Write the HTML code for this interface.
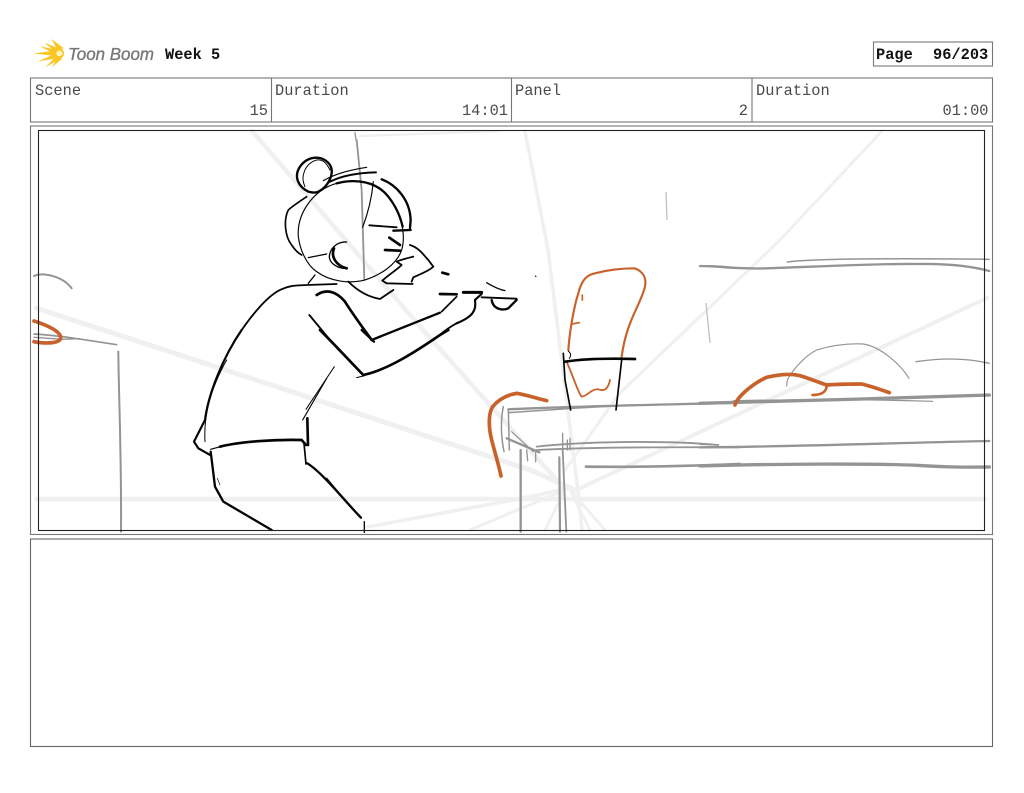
<!DOCTYPE html>
<html lang="en">
<head>
<meta charset="utf-8">
<title>Storyboard</title>
<style>
html,body{margin:0;padding:0;background:#fff;width:1024px;height:793px;overflow:hidden}
svg{display:block;filter:blur(.3px)}
text{font-family:"Liberation Mono",monospace;font-size:15.35px;fill:#4a4a4a}
.b{font-weight:bold;fill:#111}
.k path{fill:none;stroke:#050505;stroke-linecap:round;stroke-linejoin:round}
.g path{fill:none;stroke:#949494;stroke-linecap:round;stroke-linejoin:round}
.o path{fill:none;stroke:#c8622a;stroke-linecap:round;stroke-linejoin:round}
.l path{fill:none;stroke:#f0f0f0;stroke-linecap:round}
</style>
</head>
<body>
<svg width="1024" height="793" viewBox="0 0 1024 793" xmlns="http://www.w3.org/2000/svg">
<rect width="1024" height="793" fill="#fff"/>

<!-- logo -->
<g transform="translate(0,30) scale(.3333)" fill="#f8c726">
<path d="M155 27L192 55L170 57Z"/>
<path d="M133 38L175 55L165 65Z"/>
<path d="M118 48L170 60L165 72Z"/>
<path d="M100 70L165 62L165 78Z"/>
<path d="M112 95L165 72L170 85Z"/>
<path d="M135 112L168 80L178 88Z"/>
<path d="M155 112L172 85L188 85Z"/>
<circle cx="175" cy="70" r="17"/>
<ellipse cx="178" cy="70" rx="9" ry="8" fill="#fff6c8"/>
</g>
<text x="68" y="60" textLength="86" lengthAdjust="spacingAndGlyphs" style="font-family:'Liberation Sans',sans-serif;font-style:italic;font-size:17.5px;fill:#777;stroke:#777;stroke-width:.35">Toon Boom</text>
<text x="165" y="59" class="b">Week 5</text>

<!-- page box -->
<rect x="873.5" y="42" width="119" height="24" fill="none" stroke="#777" stroke-width="1.1"/>
<text x="876" y="59" class="b">Page</text>
<text x="933" y="59" class="b">96/203</text>

<!-- header table -->
<rect x="30.5" y="78" width="962" height="44" fill="none" stroke="#777" stroke-width="1.1"/>
<path d="M271.5 78V122M511.5 78V122M752 78V122" stroke="#777" stroke-width="1.1" fill="none"/>
<text x="35" y="95">Scene</text>
<text x="275" y="95">Duration</text>
<text x="515" y="95">Panel</text>
<text x="756" y="95">Duration</text>
<text x="268" y="115" text-anchor="end">15</text>
<text x="508" y="115" text-anchor="end">14:01</text>
<text x="748" y="115" text-anchor="end">2</text>
<text x="988.5" y="115" text-anchor="end">01:00</text>

<!-- construction lines -->
<g class="l">
<path stroke-width="4.5" d="M252 131L423 330L563 487"/>
<path stroke-width="5" d="M36 308L180 355L530 470L575 490"/>
<path stroke-width="4.5" d="M36 499H985"/>
<path stroke-width="3.5" d="M525 131L548 250L577 483L582 530"/>
<path stroke-width="3" d="M882 131L780 240L620 393L565 470"/>
<path stroke-width="4" d="M987 298L700 432L572 492"/>
<path stroke-width="3.5" d="M367 527L513 500L570 488"/>
<path stroke-width="3" d="M570 490L605 530M570 490L590 530M565 490L545 530M565 490L470 530"/>
<path stroke-width="2.5" d="M360 136L500 131"/>
</g>

<!-- grey sketch: left -->
<g class="g" transform="translate(20,260) scale(.3333)">
<path stroke-width="6" d="M42 48C70 35 130 50 155 85"/>
<path stroke-width="5" d="M42 222C100 225 130 230 185 238L290 254"/>
<path stroke-width="4" d="M42 232L125 238L180 236"/>
<path stroke-width="6" d="M295 275C296 400 305 600 303 815"/>
</g>

<!-- grey vertical over head -->
<g class="g" transform="translate(180,140) scale(.3333)">
<path stroke-width="5.5" d="M530 0L545 150L553 420"/>
<path stroke-width="4" d="M525 -22L528 0"/>
</g>
<path d="M666 192L667 220M706 303L710 343" stroke="#bbb" stroke-width="1.2" fill="none"/>

<!-- table -->
<g class="g" transform="translate(480,250) scale(.3333)">
<path stroke-width="7" d="M85 478C250 470 500 465 780 458"/>
<path stroke-width="4.5" d="M85 488C200 480 270 475 400 468"/>
<path stroke-width="4.5" d="M70 470C60 520 65 570 72 605"/>
<path stroke-width="4.5" d="M85 480L88 600"/>
<path stroke-width="7" d="M80 565L178 607"/>
<path stroke-width="3.5" d="M95 545L160 605"/>
<path stroke-width="4" d="M140 600L143 632M167 600L167 635M262 570L262 600M270 565L270 600"/>
<path stroke-width="5.5" d="M170 590C300 575 550 570 715 585"/>
<path stroke-width="5.5" d="M170 600C350 590 600 592 780 592"/>
<path stroke-width="4" d="M248 550L248 600"/>
<path stroke-width="7" d="M122 600L122 845"/>
<path stroke-width="6.5" d="M238 622L240 845"/>
<path stroke-width="5.5" d="M248 600L259 845"/>
<path stroke-width="8" d="M318 650C450 652 650 648 780 642"/>
<path stroke-width="5" d="M660 48C700 46 740 50 780 55"/>
</g>
<g class="g" transform="translate(700,240) scale(.3333)">
<path stroke-width="7" d="M0 78C60 78 100 88 200 85C350 80 550 70 650 72C750 70 820 80 868 93"/>
<path stroke-width="4.5" d="M262 66C350 55 600 55 868 58"/>
<path stroke-width="3.5" d="M260 438L262 420C275 395 310 350 350 330C400 315 450 310 490 312C540 320 600 370 627 415"/>
<path stroke-width="4" d="M648 365C720 355 790 352 868 370"/>
<path stroke-width="10" d="M0 490C250 483 600 475 868 465"/>
<path stroke-width="3.5" d="M100 482C300 478 500 478 698 484"/>
<path stroke-width="7" d="M0 622C300 620 600 608 868 603"/>
<path stroke-width="4" d="M0 613L52 615"/>
<path stroke-width="10" d="M0 678C200 672 500 670 650 676C750 682 800 682 868 681"/>
</g>

<!-- orange -->
<g class="o" transform="translate(20,260) scale(.3333)">
<path stroke-width="11" d="M42 183C80 195 125 215 122 235C118 250 80 252 42 245"/>
</g>
<g class="o" transform="translate(480,250) scale(.3333)">
<path stroke-width="6.5" d="M265 300C270 230 285 160 295 130C305 90 320 75 345 70C390 58 430 55 465 55C490 65 500 85 495 110C480 170 440 210 425 320"/>
<path stroke-width="5.5" d="M262 340C280 380 295 430 305 440C320 440 335 415 355 418C375 425 385 415 390 390"/>
<path stroke-width="5" d="M307 135L307 150M275 222L298 218"/>
<path stroke-width="11" d="M200 452C170 445 140 435 110 430C80 435 55 450 38 470C25 490 25 530 35 570C45 610 55 640 63 678"/>
</g>
<g class="o" transform="translate(700,240) scale(.3333)">
<path stroke-width="11" d="M105 495C110 475 150 435 200 412C230 405 270 400 300 407C340 420 370 432 380 435C420 432 460 432 485 432C510 438 540 448 568 458"/>
<path stroke-width="8" d="M380 440C378 458 360 465 338 465"/>
</g>

<!-- chair black -->
<g class="k" transform="translate(480,250) scale(.3333)">
<path stroke-width="5" d="M250 310L255 390L272 480"/>
<path stroke-width="8" d="M255 335C320 325 400 325 465 327"/>
<path stroke-width="5" d="M425 330L408 480"/>
<path stroke-width="3" d="M265 303C272 310 275 315 268 325"/>
<path stroke-width="3" d="M166 78L168 80"/>
</g>

<!-- character: upper -->
<g class="k" transform="translate(180,140) scale(.3333)">
<path stroke-width="7" d="M385 155C355 140 340 110 360 80C385 45 430 45 450 75C465 100 445 140 415 155C405 160 395 158 385 155Z"/>
<path stroke-width="3" d="M375 140C360 110 375 70 410 60C430 58 440 70 450 90"/>
<path stroke-width="3.5" d="M430 122C470 100 510 90 560 82"/>
<path stroke-width="6" d="M450 125C490 105 540 98 588 97"/>
<path stroke-width="3.5" d="M355 290C350 220 400 150 470 130C530 115 590 125 625 170C660 215 680 280 665 330C650 375 600 405 555 420C510 432 450 425 410 395C380 375 360 330 355 290Z"/>
<path stroke-width="7" d="M470 130C530 115 590 125 625 170C645 195 660 225 668 260"/>
<path stroke-width="7" d="M605 118C650 135 690 180 692 240L690 265"/>
<path stroke-width="7" d="M640 272L692 270"/>
<path stroke-width="5.5" d="M568 256L650 262"/>
<path stroke-width="3.5" d="M580 125C575 180 560 230 548 262"/>
<path stroke-width="5" d="M380 170C350 190 330 205 325 210C310 240 315 290 335 315C345 330 355 340 365 345"/>
<path stroke-width="4" d="M385 353L440 342"/>
<path stroke-width="4" d="M500 306C470 305 450 325 448 350C448 370 475 388 502 385"/>
<path stroke-width="8" d="M462 325C452 350 468 377 500 385"/>
<path stroke-width="8" d="M628 293L660 315"/>
<path stroke-width="8" d="M615 330L660 332"/>
<path stroke-width="5.5" d="M690 315C720 325 730 345 745 360L760 380C745 395 720 402 700 412L695 425"/>
<path stroke-width="5.5" d="M700 350C680 355 660 360 650 365L665 375C650 390 625 405 607 422L620 430L698 432"/>
<path stroke-width="8" d="M787 398L805 403"/>
<path stroke-width="4" d="M405 405L385 430"/>
<path stroke-width="5.5" d="M505 425C530 450 560 470 600 477L640 450"/>
<path stroke-width="5.5" d="M165 600C210 530 260 470 300 450C330 435 350 437 380 435L470 432"/>
<path stroke-width="8" d="M410 465C440 445 470 455 495 485C520 525 550 565 575 600"/>
<path stroke-width="7" d="M575 600L780 518"/>
<path stroke-width="8" d="M780 462L830 463"/>
<path stroke-width="9" d="M850 457L905 457"/>
<path stroke-width="5" d="M830 470L785 515"/>
<path stroke-width="6.5" d="M905 462L885 480C890 510 880 530 830 550"/>
<path stroke-width="5.5" d="M830 550C800 565 780 585 760 600"/>
<path stroke-width="5.5" d="M905 472L1010 476"/>
<path stroke-width="7" d="M935 480C940 510 970 512 985 505L1010 480"/>
<path stroke-width="4" d="M920 428C940 440 955 448 975 452"/>
<path stroke-width="5.5" d="M388 525L450 600"/>
</g>

<!-- character: lower -->
<g class="k" transform="translate(180,330) scale(.3333)">
<path stroke-width="6.5" d="M185 0C130 80 85 190 75 270L42 335L55 355L90 375"/>
<path stroke-width="3" d="M140 90C95 170 70 250 75 335"/>
<path stroke-width="8" d="M120 350C180 335 280 328 365 330L378 345"/>
<path stroke-width="3.5" d="M92 358L125 349"/>
<path stroke-width="7" d="M92 365L105 470L130 515L275 600"/>
<path stroke-width="8" d="M382 265L384 345"/>
<path stroke-width="5" d="M372 340L378 402"/>
<path stroke-width="7" d="M382 400C430 430 500 520 543 563"/>
<path stroke-width="4" d="M440 445C470 480 510 530 540 560"/>
<path stroke-width="4" d="M553 575L553 607"/>
<path stroke-width="3.5" d="M368 270L440 145"/>
<path stroke-width="3" d="M378 238L463 110"/>
<path stroke-width="8" d="M420 0C470 50 520 105 550 135C620 120 700 70 780 15L805 0"/>
<path stroke-width="3" d="M530 143L555 137"/>
<path stroke-width="7" d="M545 0L582 35"/>
<path stroke-width="2" d="M112 445L120 465"/>
</g>

<!-- frames -->
<rect x="30.5" y="126" width="962" height="408.5" fill="none" stroke="#777" stroke-width="1.1"/>
<rect x="38.5" y="130.5" width="946" height="400" fill="none" stroke="#222" stroke-width="1.1"/>
<rect x="30.5" y="539" width="962" height="207.5" fill="none" stroke="#666" stroke-width="1.1"/>
</svg>
</body>
</html>
